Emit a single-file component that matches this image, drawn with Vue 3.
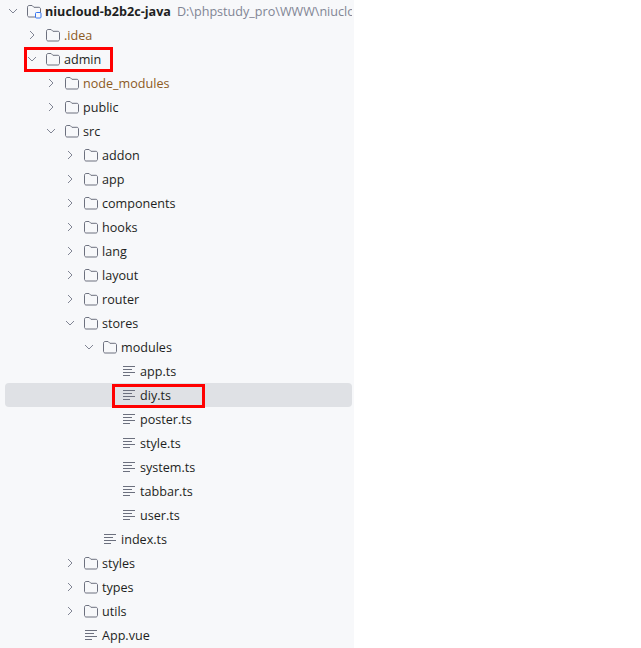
<script setup>
const rows = [
  { name: 'niucloud-b2b2c-java', level: 0, kind: 'root', open: true, path: 'D:\\phpstudy_pro\\WWW\\niucloud' },
  { name: '.idea', level: 1, kind: 'folder', closed: true, ignored: true },
  { name: 'admin', level: 1, kind: 'folder', open: true, boxed: true },
  { name: 'node_modules', level: 2, kind: 'folder', closed: true, ignored: true },
  { name: 'public', level: 2, kind: 'folder', closed: true },
  { name: 'src', level: 2, kind: 'folder', open: true },
  { name: 'addon', level: 3, kind: 'folder', closed: true },
  { name: 'app', level: 3, kind: 'folder', closed: true },
  { name: 'components', level: 3, kind: 'folder', closed: true },
  { name: 'hooks', level: 3, kind: 'folder', closed: true },
  { name: 'lang', level: 3, kind: 'folder', closed: true },
  { name: 'layout', level: 3, kind: 'folder', closed: true },
  { name: 'router', level: 3, kind: 'folder', closed: true },
  { name: 'stores', level: 3, kind: 'folder', open: true },
  { name: 'modules', level: 4, kind: 'folder', open: true },
  { name: 'app.ts', level: 5, kind: 'file' },
  { name: 'diy.ts', level: 5, kind: 'file', selected: true, boxed: true },
  { name: 'poster.ts', level: 5, kind: 'file' },
  { name: 'style.ts', level: 5, kind: 'file' },
  { name: 'system.ts', level: 5, kind: 'file' },
  { name: 'tabbar.ts', level: 5, kind: 'file' },
  { name: 'user.ts', level: 5, kind: 'file' },
  { name: 'index.ts', level: 4, kind: 'file' },
  { name: 'styles', level: 3, kind: 'folder', closed: true },
  { name: 'types', level: 3, kind: 'folder', closed: true },
  { name: 'utils', level: 3, kind: 'folder', closed: true },
  { name: 'App.vue', level: 3, kind: 'file' }
]
const indent = (r) => ({ paddingLeft: 3 + r.level * 19 + 'px' })
</script>

<template>
  <div class="page">
    <aside class="panel">
      <div class="tree">
        <div v-for="r in rows" :key="r.name" class="row" :class="{ selected: r.selected }">
          <div class="inner" :class="r.kind" :style="indent(r)">
            <span class="chev">
              <svg v-if="r.open" width="10" height="10" viewBox="0 0 10 10"><path d="M1 3l4 4 4-4" /></svg>
              <svg v-else-if="r.closed" width="10" height="10" viewBox="0 0 10 10"><path d="M3 1l4 4-4 4" /></svg>
            </span>
            <svg v-if="r.kind === 'file'" class="icon" width="16" height="16" viewBox="0 0 16 16">
              <path class="lines" d="M2 3.500h12M2 6.500h9M2 9.500h12M2 12.500h7" />
            </svg>
            <svg v-else class="icon" width="16" height="16" viewBox="0 0 16 16">
              <path class="fold" d="M1.500 4.200c0-.9.7-1.700 1.600-1.700h3l1.800 1.800h5c.9 0 1.600.7 1.600 1.600v6.400c0 .9-.7 1.700-1.600 1.700H3.100c-.9 0-1.600-.8-1.600-1.700z" />
              <rect v-if="r.kind === 'root'" class="mod" x="9.500" y="9.500" width="5.500" height="5.500" rx="1" />
            </svg>
            <span class="name" :class="{ ignored: r.ignored, bold: r.kind === 'root' }">
              <span v-if="r.boxed" class="box" :class="r.kind"></span>{{ r.name }}
            </span>
            <span v-if="r.path" class="path">{{ r.path }}</span>
          </div>
        </div>
      </div>
    </aside>
  </div>
</template>

<style>
html, body { margin: 0; background: #fff; overflow: hidden; }
</style>

<style scoped>
.page {
  width: 641px;
  height: 648px;
  overflow: hidden;
  background: #fff;
  font-family: "Open Sans", "Liberation Sans", sans-serif;
  font-size: 12.600px;
}
.panel {
  width: 354px;
  height: 648px;
  background: #f7f8fa;
  overflow: hidden;
}
.tree {
  margin-top: -1px;
  display: flex;
  flex-direction: column;
}
.row {
  height: 24px;
  margin: 0 2px 0 5px;
  border-radius: 4px;
  display: flex;
  align-items: center;
  position: relative;
}
.row.selected { background: #dfe1e5; }
.inner {
  display: flex;
  align-items: center;
  height: 24px;
  white-space: nowrap;
  min-width: 0;
  color: #1e1f22;
  overflow: hidden;
  width: 100%;
  box-sizing: border-box;
}
.chev {
  width: 10px;
  height: 10px;
  flex: none;
  margin-right: 8px;
  display: flex;
}
.chev path {
  fill: none;
  stroke: #818594;
  stroke-width: 1;
}
.icon { flex: none; margin-right: 3px; }
.fold { fill: none; stroke: #6c707e; stroke-width: 1; }
.mod { fill: #f7f8fa; stroke: #3574f0; stroke-width: 1; }
.lines { fill: none; stroke: #6c707e; stroke-width: 1; }
.name.bold { font-weight: 700; }
.name.ignored { color: #8c5a1e; }
.path { margin-left: 6px; color: #818594; }
.row:has(.box) { z-index: 1; }
.inner:has(.box) { overflow: visible; }
.box {
  position: absolute;
  border: 3px solid #f00;
  box-sizing: border-box;
  pointer-events: none;
}
.box.folder { left: 19px; top: 0; width: 89px; height: 25px; }
.box.file { left: 107px; top: 1px; width: 93px; height: 24px; }
</style>
